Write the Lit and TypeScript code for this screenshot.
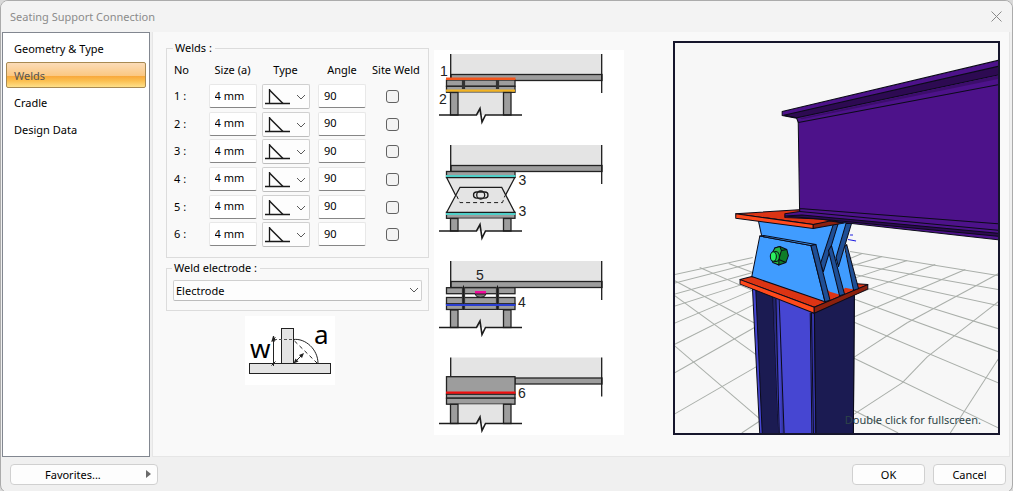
import { LitElement, html, svg, css } from "lit";
import { customElement, state } from "lit/decorators.js";

type Line = [number, number, number, number];

const FLOOR_LINES: Line[] = [
  [675, 274, 753, 257], [675, 282.5, 753, 262.5], [675, 293.5, 753, 272], [675, 305.5, 753, 280.5],
  [675, 322.5, 753, 289.5], [675, 343.5, 756, 303], [675, 372, 756, 326], [675, 413, 758, 365],
  [742, 432, 760, 420], [700, 267, 753, 290], [729, 263, 753, 272], [675, 280, 756, 323],
  [675, 295, 758, 355], [675, 345, 760, 418],
  [850, 251, 998, 275], [850, 263, 998, 289], [850, 273, 998, 305], [853, 283, 998, 328],
  [853, 298, 998, 351], [853, 321, 998, 382], [853, 357, 998, 427], [853, 409, 898, 432],
  [862, 253, 850, 258], [882, 256, 850, 266], [907, 260, 850, 279], [935, 264, 852, 295],
  [965, 269, 852, 317], [998, 273, 907, 322], [907, 322, 853, 357], [998, 301, 927, 356],
  [927, 356, 902, 382], [902, 382, 853, 414], [998, 358, 950, 432],
];

const SECTIONS = ["Geometry & Type", "Welds", "Cradle", "Design Data"];

@customElement("weld-diagrams")
export class WeldDiagrams extends LitElement {
  static styles = css`
    :host { display: block; }
    svg { display: block; width: 100%; height: auto; }
    .web { fill: #e4e4e4; }
    .steel { fill: #9d9d9d; stroke: #222; stroke-width: 1.3; }
    .ink { fill: none; stroke: #1c1c1c; stroke-width: 1.3; }
    .break { fill: none; stroke: #1c1c1c; stroke-width: 1.6; }
    .thin { fill: none; stroke: #1c1c1c; stroke-width: 1; }
    .bolt { stroke: #333; stroke-width: 3.2; }
    .num { font: 14px "Liberation Sans", Arial, sans-serif; fill: #222; }
  `;

  private beam(top: number, from = 451) {
    return svg`
      <rect class="web" x="451" y=${top} width="151" height="20.5" />
      <rect class="steel" x=${from} y=${top + 20.5} width=${602 - from} height="6" />
      <path class="ink" d="M450.7 ${top}V${top + 26}M601.7 ${top}V${top + 39}" />`;
  }

  private column(top: number, end: number) {
    return svg`
      <rect class="web" x="458" y=${top} width="45" height=${end - top} />
      <rect class="steel" x="450.5" y=${top} width="7.5" height=${end - top} />
      <rect class="steel" x="503.5" y=${top} width="7.5" height=${end - top} />
      <path class="break" d="M439 ${end}H476.5l3.5-6.500 2 13.500 3.500-7H522" />`;
  }

  render() {
    return html`<svg viewBox="434 50 190 385" role="img" aria-label="Weld positions">
      <rect x="434" y="50" width="190" height="385" fill="#fff" />
      ${this.beam(54)}
      <rect class="steel" x="446.500" y="80" width="68.500" height="6.300" />
      <rect class="steel" x="446.500" y="86.300" width="68.500" height="6" />
      <path class="bolt" d="M463.500 80v9M497.500 80v9" />
      <path d="M446 78.700h69.500" stroke="#f4561c" stroke-width="2.600" />
      <path d="M446 90.700h69" stroke="#f2b322" stroke-width="2.200" />
      ${this.column(92.5, 115)}
      <text class="num" x="440" y="76">1</text><text class="num" x="439" y="104">2</text>

      ${this.beam(145)}
      <rect class="steel" x="446.500" y="171.500" width="68.500" height="6" />
      <path d="M446.700 177.700H514.700L502.500 202.500H460Z" fill="#e4e4e4" />
      <path class="ink" d="M457 198L446.700 177.700H514.700L504 198" />
      <path d="M446 176h69.500" stroke="#4fcfc8" stroke-width="2.200" />
      <rect class="steel" x="446.500" y="212.300" width="68.500" height="6" />
      <path d="M460 187.300H501.700L514.700 212.300H446.700Z" fill="#e4e4e4" stroke="#1c1c1c" stroke-width="1.300" />
      <path class="thin" stroke-dasharray="4 3" d="M456.500 195.500L460 202.600H502.500L505 195.500" />
      <path d="M446 214h69.500" stroke="#4fcfc8" stroke-width="2.200" />
      <rect class="ink" x="473.500" y="192" width="14.500" height="6.200" rx="3.100" />
      <circle class="ink" cx="480.700" cy="195" r="4" />
      ${this.column(218.5, 231)}
      <text class="num" x="518.500" y="185">3</text><text class="num" x="518.500" y="216">3</text>

      ${this.beam(261)}
      <rect class="steel" x="446.500" y="287.700" width="68.500" height="6" />
      <path d="M475 294h11q-1 3.500-5.500 3.500t-5.500-3.500" fill="#777" stroke="#1c1c1c" />
      <rect x="475" y="291" width="11" height="2.500" fill="#f20a9b" />
      <rect class="steel" x="446.500" y="297.500" width="68.500" height="6.500" />
      <rect class="steel" x="446.500" y="304" width="68.500" height="5.500" />
      <path class="bolt" d="M463.500 287v22.500M497.500 287v22.500" />
      <path class="thin" d="M463.500 285.500v26M497.500 285.500v26" />
      <path d="M446 305h69.500" stroke="#2b3fd0" stroke-width="2.200" />
      ${this.column(310, 327.5)}
      <text class="num" x="476" y="280">5</text><text class="num" x="518" y="307">4</text>

      ${this.beam(357.5, 515)}
      <rect class="steel" x="446.500" y="376.700" width="68.500" height="17.500" />
      <rect class="steel" x="446.500" y="394.200" width="68.500" height="4" />
      <rect class="steel" x="446.500" y="398.200" width="68.500" height="6" />
      <path d="M446 392.700h69.500" stroke="#f01010" stroke-width="2.200" />
      ${this.column(404.3, 423.5)}
      <text class="num" x="518" y="398">6</text>
    </svg>`;
  }
}

@customElement("model-view")
export class ModelView extends LitElement {
  static styles = css`
    :host { display: block; position: relative; box-sizing: border-box; border: 2px solid #16162c; background: #f7f7f7; overflow: hidden; }
    svg { display: block; position: absolute; inset: 0; width: 100%; height: 100%; }
    .edge { stroke: #0b0b18; stroke-width: 1; stroke-linejoin: round; }
    .floor { stroke: #a9aea9; stroke-width: 1; }
    .red { fill: #dc3414; } .front { fill: #ff4a1c; } .shade { fill: #8c210e; }
    .blue { fill: #409cff; } .navy { fill: #1f4f96; }
    .violet { fill: #4d128a; } .deep { fill: #2d0a52; }
    .hint { position: absolute; right: 17px; bottom: 4px; font-size: 11px; line-height: 18px; color: #2f4548; white-space: nowrap; }
  `;

  render() {
    return html`<svg viewBox="675 43 323 389" preserveAspectRatio="xMidYMid slice" role="img" aria-label="3D model of the connection">
        <defs>
          <linearGradient id="fillet"><stop offset="0" stop-color="#191950" /><stop offset=".6" stop-color="#4646d2" /><stop offset="1" stop-color="#2c2c90" /></linearGradient>
        </defs>
        ${FLOOR_LINES.map(([a, b, c, d]) => svg`<line class="floor" x1=${a} y1=${b} x2=${c} y2=${d} />`)}
        <path d="M850 234.500h3M848 239l8 1.500" stroke="#2020e0" />
        <g class="edge">
          <path fill="#4646d2" d="M752.700 288L814 310 854.300 294 853.300 434H760Z" />
          <path fill="#1b1b52" d="M756 289L773 296 779 434H762.500Z" />
          <path fill="url(#fillet)" stroke="none" d="M773 296L779.300 299 784 434H779Z" />
          <path fill="none" d="M776 298L779.500 434M779.300 299L784.300 434M810.300 312L812 434" />
          <path fill="#3434a8" d="M811.500 312L814.500 312 816 434H813.500Z" />
          <path fill="#1b1b52" d="M814.500 312L854.300 294 853.300 434H816Z" />

          <path class="red" d="M740.300 279L752 276 867.700 284 814.300 306.500Z" />
          <path class="front" d="M740.300 279L814.300 306.500V312.500L740.300 283.500Z" />
          <path class="shade" d="M814.300 306.500L867.700 284V288.500L814.300 312.500Z" />

          <path class="blue" d="M758.300 219H850L843.500 246 855 289 845 287 840 294 830 291 762 238Z" stroke="none" />
          <path fill="none" d="M758.300 219L762 236" />
          <path class="navy" d="M846 223L851.500 223 838.500 266 836 257Z" />
          <path class="navy" d="M844.500 246L846.700 244 858.500 288 853.500 289.500Z" />
          <path class="navy" d="M833.500 223.500L838.500 222 823.500 271 820.500 263Z" />
          <path class="navy" d="M828.500 250L831.500 245 844.500 293.500 839.500 295Z" />
          <path class="blue" d="M760 235.500L811 245 825 301 752 276Z" />
          <path class="blue" d="M760 235.500L764 235 816 244 811 245Z" />
          <path class="navy" d="M811 245L816 244 830 299.500 825 301Z" />

          <path fill="#0e7d28" d="M775 247.500L780 246 787 249 788.500 255 786 262 779 264.500 775 261Z" />
          <path fill="#25b545" d="M775 247.500L780 246 781.500 250 779 259 779 264.500 773 262 771 255Z" />
          <path fill="none" d="M781.500 250L787 249M779 259L786 262" />
          <ellipse fill="#17c23f" cx="776" cy="256" rx="3.500" ry="5" />
          <ellipse fill="#2bf061" cx="773.500" cy="256" rx="3" ry="4.700" />

          <path class="red" d="M736 213.300L799 209.300 843 221 813.300 224Z" />
          <path class="front" d="M736 213.300L813.300 224V228L736 217.700Z" />
          <path class="shade" d="M813.300 224L830 220.500 844 222.500 813.300 228Z" />

          <path class="violet" d="M785 213.300L799.700 211V207L999 222V239.500L843 222 820 218.500 785 217Z" />
          <path class="deep" d="M785 215.500L802 214.500 999 233V236L830 219.500Z" />
          <path fill="none" d="M800 211L999 230" />
          <path class="violet" d="M798.300 118L999 84 999 223.500 799.700 208Z" stroke="none" />
          <path fill="none" d="M798.300 120L799.700 211.500M799.700 208L999 223.500" />
          <path class="violet" d="M782.300 111.300L999 60V84.300L798.500 122.300 796.700 118 782.300 115.300Z" />
          <path class="deep" d="M784 115L999 66V74.700L797 117.500Z" />
          <path fill="#3c0e6c" stroke="none" d="M800 118L999 75.200V78.500L802 119Z" />
        </g>
      </svg>
      <span class="hint">Double click for fullscreen.</span>`;
  }
}

@customElement("app-root")
export class AppRoot extends LitElement {
  @state() private active = "Welds";

  static styles = css`
    :host { display: block; min-height: 100vh; background: #d9d9d9; font-family: "Noto Sans", Tahoma, sans-serif; font-size: 11px; color: #000; }
    * { box-sizing: border-box; }
    .window { min-height: 100vh; display: flex; flex-direction: column; background: #f0f0f0; border: 1px solid #ababab; border-radius: 8px; overflow: hidden; }
    .title { height: 31px; flex: none; display: flex; align-items: center; justify-content: space-between; padding: 0 9px; background: #f3f3f3; color: #8b8b8b; }
    .title h1 { margin: 0; font-weight: 400; font-size: 11px; }
    button { font: inherit; color: inherit; cursor: default; }
    .close { width: 13px; height: 13px; padding: 0; border: 0; background: none; display: flex; }
    .body { flex: 1; display: flex; gap: 2px; padding: 0 2px 0 1px; }
    .nav { width: 148px; flex: none; background: #fff; border: 1px solid #828790; padding: 2px 3px; display: flex; flex-direction: column; gap: 1px; }
    .nav button { height: 26px; padding: 0 7px; text-align: left; background: none; border: 1px solid transparent; border-radius: 2px; }
    .nav .on { color: #555; border-color: #a88a52; background: linear-gradient(#fbdcb8, #fbc77f 55%, #f8a93c 56%, #fbc052 75%, #fee08a); }
    .main { flex: 1; display: grid; grid-template-columns: 263px 190px 1fr; background: #f9f9f9; border: 1px solid #e6e6e6; border-top: 0; padding: 9px 9px 21px 13px; }
    .form { display: flex; flex-direction: column; padding-top: 1px; }
    fieldset { margin: 0; border: 1px solid #dcdcdc; min-width: 0; padding: 0 7px; }
    legend { padding: 0 3px 0 2px; margin-left: -1px; font-size: 11px; line-height: 12px; }
    .welds { height: 216px; }
    .electrode { height: 49px; margin-top: 4px; padding: 0 6px; }
    table { border-collapse: collapse; table-layout: fixed; width: 238px; height: 196px; }
    th, td { padding: 0; font-weight: 400; text-align: center; vertical-align: top; white-space: nowrap; }
    thead tr { height: 30px; }
    thead th { padding-top: 8px; line-height: 16px; }
    tbody { height: 166px; }
    tr > :first-child { text-align: left; }
    tbody th { line-height: 24px; }
    .c1 { width: 32px; } .c2 { width: 53px; } .c4 { width: 60px; } .c5 { width: 40px; }
    .field { display: block; margin: 0 auto; width: 48px; height: 24px; padding: 0 5px 2px; font: inherit; background: #fff; border: 1px solid #e8e8e8; border-bottom-color: #868686; border-radius: 2px; outline: 0; }
    .pick { position: relative; display: block; width: 48px; margin: 0 auto; }
    select { appearance: none; font: inherit; color: inherit; display: block; width: 100%; border: 1px solid #d0d0d0; border-bottom-color: #bcbcbc; border-radius: 2px; background: #fdfdfd; outline: 0; padding: 0 2px; }
    .pick select { height: 25px; }
    .pick svg { position: absolute; inset: 0; pointer-events: none; }
    .combo { position: relative; display: block; margin-top: 6px; }
    .combo select { height: 21px; }
    .combo svg { position: absolute; right: 3px; top: 7px; pointer-events: none; }
    .tick { appearance: none; display: block; width: 13px; height: 13px; margin: 6px auto 0; border: 1px solid #626262; border-radius: 3px; background: #f3f3f3; }
    .tick:checked { background: #2a6bc0; }
    .throat { display: block; width: 90px; height: 69px; margin: 5px 0 0 79px; }
    .throat text { font-size: 26px; }
    weld-diagrams { margin: 9px 0 0 5px; width: 190px; }
    model-view { margin-left: 54px; }
    .foot { flex: none; height: 35px; display: flex; align-items: center; gap: 8px; padding: 0 6px 1px 9px; }
    .foot button { height: 21px; width: 73px; padding: 0; background: #fdfdfd; border: 1px solid #d0d0d0; border-radius: 4px; }
    .foot .fav { width: 148px; margin-right: auto; display: flex; align-items: center; justify-content: space-between; padding: 0 6px 0 34px; }
  `;

  private row(n: number) {
    return html`<tr>
      <th scope="row">${n} :</th>
      <td><input class="field" aria-label="Size of weld ${n}" .value=${"4 mm"} /></td>
      <td><span class="pick">
        <select aria-label="Type of weld ${n}"><option></option></select>
        <svg width="48" height="25" fill="none" stroke="#1a1a1a">
          <path d="M3 19.500H28M7.500 5V19.500" stroke-width="1.300" /><path d="M7.500 6L21 19.500" stroke-width="1.500" />
          <path d="M35 11l4 4 4-4" stroke="#5a5a5a" />
        </svg></span></td>
      <td><input class="field" aria-label="Angle of weld ${n}" .value=${"90"} /></td>
      <td><input class="tick" type="checkbox" aria-label="Site weld ${n}" /></td>
    </tr>`;
  }

  render() {
    return html`<div class="window">
      <header class="title">
        <h1>Seating Support Connection</h1>
        <button class="close" aria-label="Close"><svg width="13" height="13" stroke="#8a8a8a"><path d="M1.500 1.500l10 10M11.500 1.500l-10 10" /></svg></button>
      </header>
      <div class="body">
        <nav class="nav">
          ${SECTIONS.map((s) => html`<button class=${s === this.active ? "on" : ""} @click=${() => (this.active = s)}>${s}</button>`)}
        </nav>
        <main class="main">
          <div class="form">
            <fieldset class="welds">
              <legend>Welds :</legend>
              <table>
                <colgroup><col class="c1" /><col class="c2" /><col class="c2" /><col class="c4" /><col class="c5" /></colgroup>
                <thead><tr><th>No</th><th>Size (a)</th><th>Type</th><th>Angle</th><th>Site Weld</th></tr></thead>
                <tbody>${[1, 2, 3, 4, 5, 6].map((n) => this.row(n))}</tbody>
              </table>
            </fieldset>
            <fieldset class="electrode">
              <legend>Weld electrode :</legend>
              <span class="combo">
                <select aria-label="Weld electrode"><option>Electrode</option></select>
                <svg width="10" height="7" fill="none" stroke="#5a5a5a"><path d="M1 1l4 4 4-4" /></svg>
              </span>
            </fieldset>
            <svg class="throat" viewBox="245 316 90 69" role="img" aria-label="Throat thickness">
              <rect x="245" y="316" width="90" height="69" fill="#fff" />
              <g stroke="#222" fill="#e4e4e4">
                <rect x="281.500" y="328.500" width="12" height="35" /><rect x="249.500" y="363.500" width="81" height="10" />
                <path fill="none" d="M293.500 339.500C305 338 318 349 318 363.500" />
                <path fill="none" stroke-dasharray="4 3" d="M294.500 341L317 363" />
                <path fill="none" stroke-dasharray="3 2" stroke="#555" d="M274 339.500H293" />
                <path fill="none" d="M273.500 337V366M271.500 341.500l4-4M271.500 365.500l4-4M273.500 336l-1.500 5h3z" />
                <path fill="none" d="M294.500 362.500L303 354" />
                <path fill="#222" stroke="none" d="M293.500 363.500l2-5 3 3zM304 353l-5 2 3 3z" />
              </g>
              <text x="250" y="358">w</text><text x="314" y="344">a</text>
            </svg>
          </div>
          <weld-diagrams></weld-diagrams>
          <model-view></model-view>
        </main>
      </div>
      <footer class="foot">
        <button class="fav"><span>Favorites...</span><svg width="5" height="8"><path d="M0 0l5 4-5 4z" fill="#6a6a6a" /></svg></button>
        <button>OK</button>
        <button>Cancel</button>
      </footer>
    </div>`;
  }
}
